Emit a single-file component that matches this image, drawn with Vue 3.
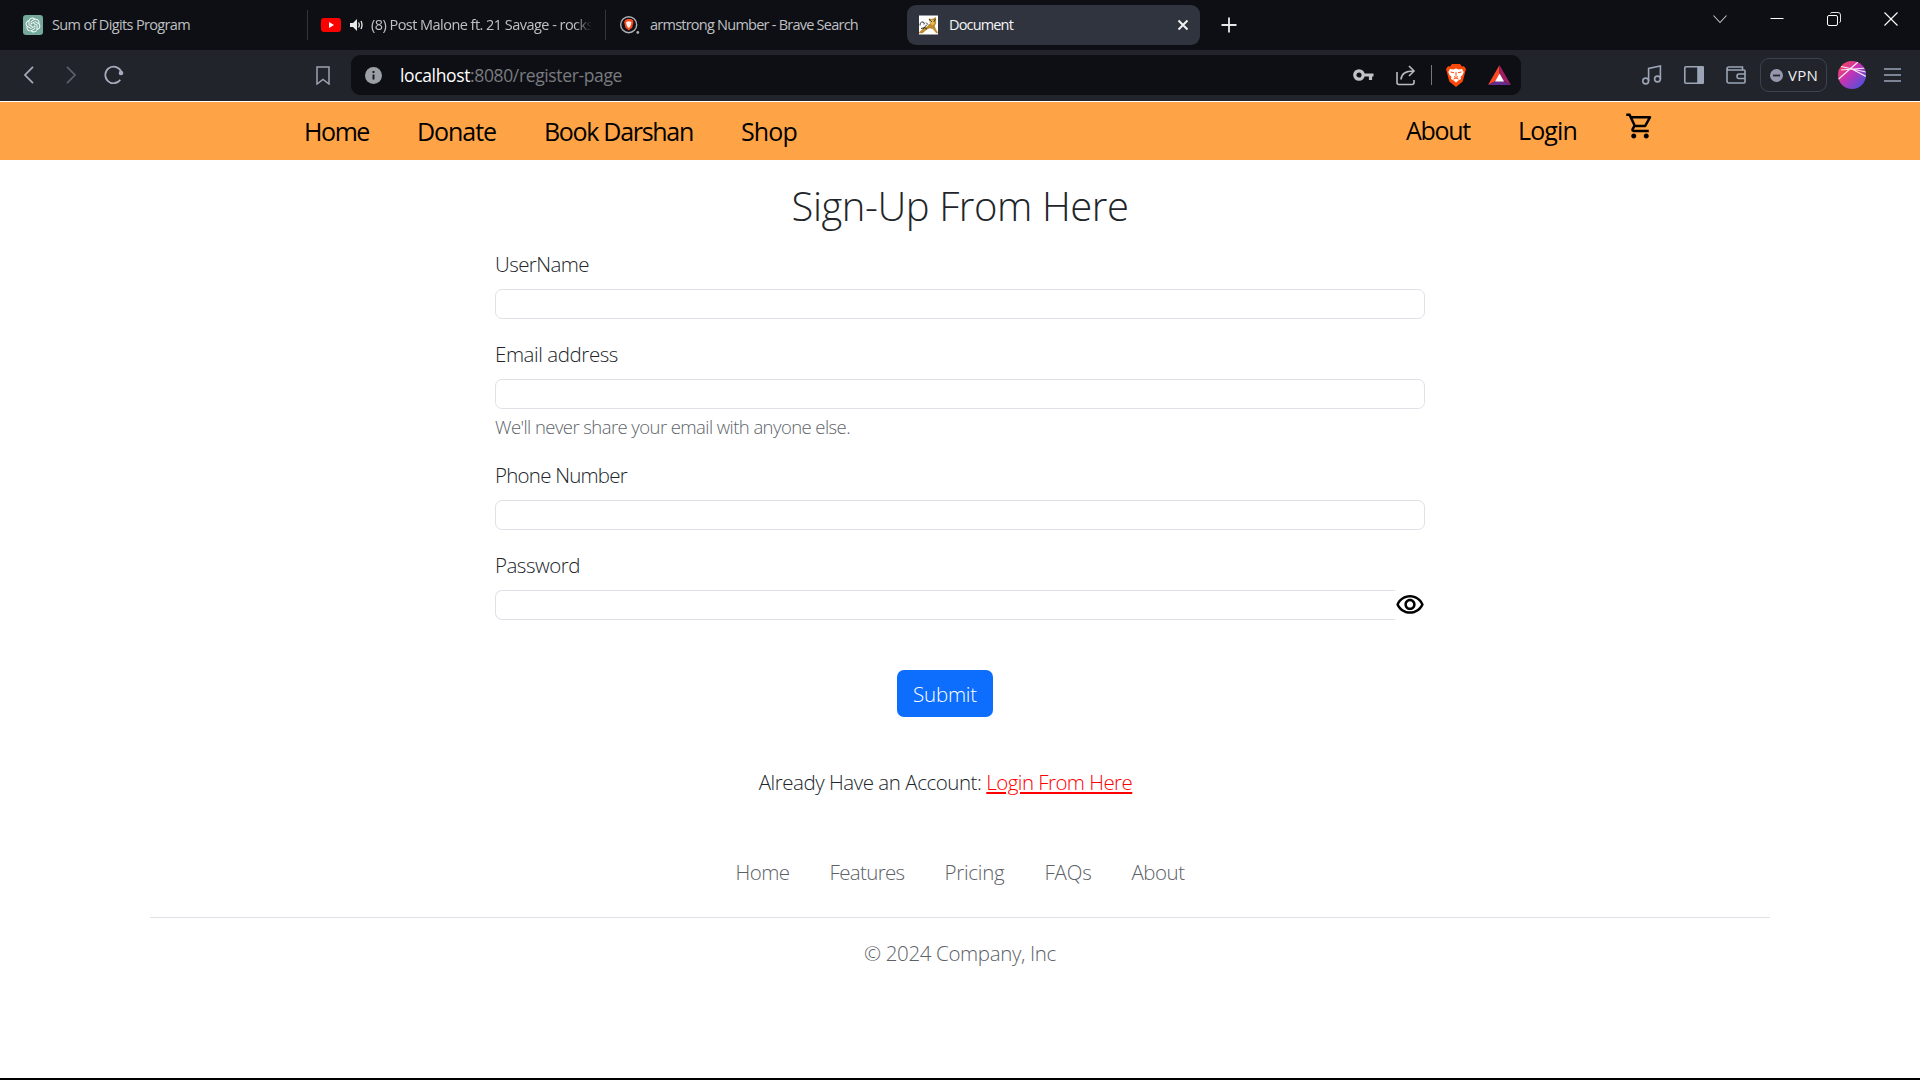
<script setup>
// Spreads the letters of an element so that its text takes the given width.
const vFit = {
  mounted(el, { value }) {
    el.style.letterSpacing = '0px'
    const natural = el.getBoundingClientRect().width
    const count = el.textContent.trim().length
    el.style.letterSpacing = `${(value - natural) / count}px`
  }
}

const navLeft = [
  { label: 'Home', width: 65 },
  { label: 'Donate', width: 79 },
  { label: 'Book Darshan', width: 149 },
  { label: 'Shop', width: 56 }
]
const navRight = [
  { label: 'About', width: 64 },
  { label: 'Login', width: 59 }
]
const fields = [
  { id: 'username', label: 'UserName', width: 94, type: 'text' },
  { id: 'email', label: 'Email address', width: 123, type: 'email', help: "We'll never share your email with anyone else." },
  { id: 'phone', label: 'Phone Number', width: 132, type: 'text' },
  { id: 'password', label: 'Password', width: 85, type: 'password' }
]
const footerLinks = [
  { label: 'Home', width: 54 },
  { label: 'Features', width: 75 },
  { label: 'Pricing', width: 60 },
  { label: 'FAQs', width: 47 },
  { label: 'About', width: 53 }
]
</script>

<template>
  <div class="screen">
    <header class="tabs">
      <div class="tab tab-one">
        <svg width="20" height="20" viewBox="0 0 20 20">
          <rect width="20" height="20" rx="3" fill="#74a99b" />
          <g transform="translate(2.6 2.6) scale(.617)">
            <path fill="#fff" d="M22.2819 9.8211a5.9847 5.9847 0 0 0-.5157-4.9108 6.0462 6.0462 0 0 0-6.5098-2.9A6.0651 6.0651 0 0 0 4.9807 4.1818a5.9847 5.9847 0 0 0-3.9977 2.9 6.0462 6.0462 0 0 0 .7427 7.0966 5.98 5.98 0 0 0 .511 4.9107 6.051 6.051 0 0 0 6.5146 2.9001A5.9847 5.9847 0 0 0 13.2599 24a6.0557 6.0557 0 0 0 5.7718-4.2058 5.9894 5.9894 0 0 0 3.9977-2.9001 6.0557 6.0557 0 0 0-.7475-7.0729zm-9.022 12.6081a4.4755 4.4755 0 0 1-2.8764-1.0408l.1419-.0804 4.7783-2.7582a.7948.7948 0 0 0 .3927-.6813v-6.7369l2.02 1.1686a.071.071 0 0 1 .038.052v5.5826a4.504 4.504 0 0 1-4.4945 4.4944zm-9.6607-4.1254a4.4708 4.4708 0 0 1-.5346-3.0137l.142.0852 4.783 2.7582a.7712.7712 0 0 0 .7806 0l5.8428-3.3685v2.3324a.0804.0804 0 0 1-.0332.0615L9.74 19.9502a4.4992 4.4992 0 0 1-6.1408-1.6464zM2.3408 7.8956a4.485 4.485 0 0 1 2.3655-1.9728V11.6a.7664.7664 0 0 0 .3879.6765l5.8144 3.3543-2.0201 1.1685a.0757.0757 0 0 1-.071 0l-4.8303-2.7865A4.504 4.504 0 0 1 2.3408 7.872zm16.5963 3.8558L13.1038 8.364 15.1192 7.2a.0757.0757 0 0 1 .071 0l4.8303 2.7913a4.4944 4.4944 0 0 1-.6765 8.1042v-5.6772a.79.79 0 0 0-.407-.667zm2.0107-3.0231l-.142-.0852-4.7735-2.7818a.7759.7759 0 0 0-.7854 0L9.409 9.2297V6.8974a.0662.0662 0 0 1 .0284-.0615l4.8303-2.7866a4.4992 4.4992 0 0 1 6.6802 4.66zM8.3065 12.863l-2.02-1.1638a.0804.0804 0 0 1-.038-.0567V6.0742a4.4992 4.4992 0 0 1 7.3757-3.4537l-.142.0805L8.704 5.459a.7948.7948 0 0 0-.3927.6813zm1.0976-2.3654l2.602-1.4998 2.6069 1.4998v2.9994l-2.5974 1.4997-2.6067-1.4997Z" />
          </g>
        </svg>
        <span v-fit="138" class="tab-title">Sum of Digits Program</span>
      </div>
      <div class="tab tab-two">
        <svg width="20" height="14" viewBox="0 0 20 14"><rect width="20" height="14" rx="3" fill="#f00" /><path d="M8 4v6l5-3z" fill="#fff" /></svg>
        <svg class="speaker" width="13" height="12" viewBox="0 0 13 12"><path d="M0 4h3l4-4v12L3 8H0z" fill="#e8e8e8" /><path d="M8.5 3.5q1.6 2.5 0 5M11 2q2 4 0 8" fill="none" stroke="#e8e8e8" stroke-width="1.3" /></svg>
        <span class="tab-title clipped"><span v-fit="222">(8) Post Malone ft. 21 Savage - rocks</span></span>
      </div>
      <div class="tab tab-three">
        <svg width="20" height="20" viewBox="0 0 20 20"><circle cx="8.7" cy="9.7" r="8" fill="#121317" stroke="#adb0b5" stroke-width="1.4" /><path d="M5 5.2 7 4h4l2 1.2.4 2-1.2 5.3-3.4 3.1-3.4-3.1L4.200 7.200z" fill="#fb4b20" /><path d="m6 7 2.700-.7L11.400 7l-.5 2.700-.9 2-1.300 1.300-1.300-1.300-.9-2z" fill="#fff0eb" /><circle cx="17.800" cy="17.500" r="1.400" fill="#aaa" /></svg>
        <span v-fit="208" class="tab-title">armstrong Number - Brave Search</span>
      </div>
      <div class="tab tab-active">
        <svg width="19" height="20" viewBox="0 0 19 20"><path d="M0 .5h19v19H0z" fill="#fff" /><path d="M0 17.500 4 13.500l4-2 3-3L10 3l1.500 1 3-.5L17 2l.2 6-1.400 3 1.200 3.500 2 3-1.500 1-3.700-4.500-3.300-.7-3.500 2-3.500 3H0z" fill="#bd8b2b" /><path d="M11 5h5l-.5 3.500-2 2-2.200-2z" fill="#e2bd61" /><path d="M1 10.500q0-4 3-3.500 2 .5 1 2.500M2 13.500q4-2 6 .5M10 4l1.500 2M16.500 4 15 6M7 7.500l2 2M8 9.500l-4 4.500" stroke="#343434" stroke-width="1" fill="none" /><circle cx="12.500" cy="6.500" r=".6" fill="#433" /><circle cx="15" cy="6.500" r=".6" fill="#433" /></svg>
        <span v-fit="64" class="tab-title">Document</span>
        <svg class="tab-close" width="12" height="12" viewBox="0 0 12 12"><path d="m1.500 1.500 9 9m0-9-9 9" stroke="#f2f2f2" stroke-width="2" /></svg>
      </div>
      <svg class="new-tab" width="16" height="16" viewBox="0 0 16 16"><path d="M8 .5v15M.5 8h15" stroke="#e8e8e8" stroke-width="1.800" /></svg>
      <div class="window-controls">
        <svg width="14" height="14" viewBox="0 0 14 14"><path d="m.5 3.500 6.500 7 6.500-7" fill="none" stroke="#c4c4c6" stroke-width="1.100" /></svg>
        <svg width="14" height="14" viewBox="0 0 14 14"><path d="M.5 6.500h13" stroke="#fff" /></svg>
        <svg width="14" height="14" viewBox="0 0 14 14"><rect x=".5" y="3.500" width="10" height="10" rx="1.500" fill="none" stroke="#fff" /><path d="M3.500 1.500q0-1 1.500-1h6q2.500 0 2.500 2.500v6q0 1.500-1 1.500" fill="none" stroke="#ddd" /></svg>
        <svg width="14" height="14" viewBox="0 0 14 14"><path d="m.5.5 13 13m0-13-13 13" stroke="#fff" stroke-width="1.100" /></svg>
      </div>
    </header>

    <div class="toolbar">
      <svg class="back" width="10" height="18" viewBox="0 0 10 18"><path d="M9 .8 1 9l8 8.200" fill="none" stroke="#a5adbc" stroke-width="1.700" /></svg>
      <svg class="forward" width="10" height="18" viewBox="0 0 10 18"><path d="m1 .8 8 8.200-8 8.200" fill="none" stroke="#5a606c" stroke-width="1.700" /></svg>
      <svg class="reload" width="20" height="20" viewBox="0 0 20 20"><path d="M16.300 14.800A8.300 8.300 0 1 1 17 6.200" fill="none" stroke="#a5adbc" stroke-width="1.700" /><circle cx="17" cy="8" r="2.300" fill="#a5adbc" /></svg>
      <svg class="bookmark" width="14" height="19" viewBox="0 0 14 19"><path d="M1 1h12v17l-6-4.500L1 18z" fill="none" stroke="#9ba2b0" stroke-width="1.500" /></svg>
      <div class="address">
        <svg width="17" height="17" viewBox="0 0 17 17"><circle cx="8.500" cy="8.500" r="8.500" fill="#9aa0a6" /><path d="M8.500 7.500v5M8.500 4v2" stroke="#17181c" stroke-width="1.900" /></svg>
        <span v-fit="222" class="url"><b>localhost</b>:8080/register-page</span>
        <svg class="key" width="21" height="14" viewBox="0 0 21 14"><circle cx="6" cy="7" r="4.200" fill="none" stroke="#c0c2c5" stroke-width="3.300" /><path d="M10.500 7h10M17.500 7v5" fill="none" stroke="#c0c2c5" stroke-width="3.200" /></svg>
        <svg class="share" width="20" height="21" viewBox="0 0 20 21"><path d="M1 7v10.500q0 2 2 2h13q2 0 2-2V15" fill="none" stroke="#b9bbbf" stroke-width="1.600" /><path d="M5 14.500Q5.500 6 17.500 6M13 1l5 5-5 5" fill="none" stroke="#b9bbbf" stroke-width="1.600" /></svg>
        <i class="divider" />
        <svg class="lion" width="20" height="23" viewBox="0 0 20 23"><path d="M6 0h8l2 2.500 2-.3L20 5l-.8 3-2.500 9.500L10 23l-6.700-5.500L.8 8 0 5l2-2.800 2 .3z" fill="#fb4a08" /><path d="m4 5 3 .5L10 4.500l3 1 3-.5 1.700 3-1.200 3-2 2 .5 2-2 1-3 2.500L7 16l-2-1 .5-2-2-2-1.200-3z" fill="#fff" /><path d="m4.500 8 3.500.7M15.500 8l-3.500.7M8 12.500l2 1 2-1M10 8v4M7.500 15l2.500-1 2.500 1" stroke="#fb4a08" stroke-width="1" fill="none" /></svg>
        <svg class="bat" width="23" height="20" viewBox="0 0 23 20"><path d="M11.500 0 0 20l7.500-4 4-7z" fill="#ff4724" /><path d="M11.500 0 23 20l-7.500-4-4-7z" fill="#9e1f63" /><path d="M0 20h23l-7.500-4h-8z" fill="#662d91" /><path d="m11.500 8.500 4.500 8H7z" fill="#fff" /></svg>
      </div>
      <svg class="music" width="20" height="20" viewBox="0 0 20 20"><circle cx="3.700" cy="16" r="2.900" /><circle cx="15.500" cy="14" r="2.900" /><path d="M6.600 16V3.500L18.400 1v13" /></svg>
      <svg class="panel" width="20" height="18" viewBox="0 0 20 18"><rect x=".8" y=".8" width="18.400" height="16.400" rx="1" /><path d="M14 1h5v16h-5z" fill="#9ba5b5" /></svg>
      <svg class="wallet" width="20" height="18" viewBox="0 0 20 18"><path d="M16.500 4V1H3Q1 1 1 3v12q0 2 2 2h15q1 0 1-1V5q0-1-1-1H3Q1 4 1 2.500M19 8h-6q-2 0-2 2.300T13 12.500h6" /></svg>
      <div class="vpn">
        <svg width="13" height="13" viewBox="0 0 13 13"><circle cx="6.500" cy="6.500" r="6.500" fill="#9697ad" /><path d="M3 6.500h7" stroke="#252833" stroke-width="1.800" /></svg>
        <span v-fit="30">VPN</span>
      </div>
      <svg class="avatar" width="28" height="28" viewBox="0 0 28 28">
        <defs><linearGradient id="avatar-fill" x1="0" y1="0" x2="1" y2="1"><stop offset=".1" stop-color="#f54560" /><stop offset=".45" stop-color="#c433b4" /><stop offset=".95" stop-color="#4055e2" /></linearGradient><clipPath id="avatar-clip"><circle cx="14" cy="14" r="14" /></clipPath></defs>
        <circle cx="14" cy="14" r="14" fill="url(#avatar-fill)" />
        <path clip-path="url(#avatar-clip)" d="M0 18.500 20 1M3 5.500 28 11M12 7l16 8.500M3 9l25-2" fill="none" stroke="#fff" stroke-opacity=".9" stroke-width="1.200" />
      </svg>
      <svg class="menu" width="17" height="14" viewBox="0 0 17 14"><path d="M0 1h17M0 7h17M0 13h17" stroke-width="1.500" /></svg>
    </div>

    <nav class="site-nav">
      <div class="nav-left">
        <a v-for="item in navLeft" :key="item.label" v-fit="item.width">{{ item.label }}</a>
      </div>
      <div class="nav-right">
        <a v-for="item in navRight" :key="item.label" v-fit="item.width">{{ item.label }}</a>
        <svg width="30" height="30" viewBox="0 0 24 24"><path d="M15.550 13c.75 0 1.410-.41 1.750-1.030l3.580-6.490c.37-.66-.11-1.480-.87-1.480H5.210l-.94-2H1v2h2l3.600 7.590-1.350 2.440C4.520 15.370 5.480 17 7 17h12v-2H7l1.100-2h7.450zM6.160 6h12.150l-2.760 5H8.530L6.160 6zM7 18c-1.100 0-1.990.9-1.990 2S5.900 22 7 22s2-.9 2-2-.9-2-2-2zm10 0c-1.100 0-1.990.9-1.990 2s.89 2 1.990 2 2-.9 2-2-.9-2-2-2z" /></svg>
      </div>
    </nav>

    <main>
      <h1><span v-fit="337">Sign-Up From Here</span></h1>
      <form @submit.prevent>
        <div v-for="field in fields" :key="field.id" class="field">
          <label :for="field.id"><span v-fit="field.width">{{ field.label }}</span></label>
          <div class="control" :class="{ grouped: field.type === 'password' }">
            <input :id="field.id" :type="field.type" />
            <svg v-if="field.type === 'password'" width="30" height="30" viewBox="0 0 24 24"><path d="M12 6c3.790 0 7.170 2.130 8.820 5.500C19.170 14.870 15.790 17 12 17s-7.170-2.130-8.820-5.500C4.830 8.130 8.210 6 12 6m0-2C7 4 2.730 7.110 1 11.500 2.730 15.890 7 19 12 19s9.270-3.110 11-7.500C21.270 7.110 17 4 12 4zm0 5c1.380 0 2.500 1.120 2.500 2.500S13.380 14 12 14s-2.500-1.120-2.500-2.500S10.620 9 12 9m0-2c-2.480 0-4.500 2.020-4.500 4.500S9.520 16 12 16s4.500-2.020 4.500-4.500S14.480 7 12 7z" /></svg>
          </div>
          <div v-if="field.help" class="help"><span v-fit="355">{{ field.help }}</span></div>
        </div>
        <button type="submit"><span v-fit="64">Submit</span></button>
        <p class="login"><span v-fit="228" class="question">Already Have an Account: </span><a v-fit="146">Login From Here</a></p>
      </form>
    </main>

    <footer>
      <div class="footer-links">
        <a v-for="link in footerLinks" :key="link.label" v-fit="link.width">{{ link.label }}</a>
      </div>
      <p><span v-fit="192">© 2024 Company, Inc</span></p>
    </footer>
  </div>
</template>

<style>
body {
  margin: 0;
  overflow: hidden;
}
</style>

<style scoped>
.screen {
  box-sizing: border-box;
  width: 1920px;
  height: 1080px;
  display: flex;
  flex-direction: column;
  overflow: hidden;
  background: #fff;
  border-bottom: 2px solid #000;
  color: #212529;
  font-family: "Open Sans", "Noto Sans", sans-serif;
}
svg {
  display: block;
  flex: none;
}
span,
a {
  white-space: pre;
}

.tabs {
  height: 50px;
  flex: none;
  display: flex;
  align-items: center;
  background: #0e0f14;
}
.tab {
  box-sizing: border-box;
  height: 30px;
  display: flex;
  align-items: center;
}
.tab-title {
  font-size: 14.5px;
  line-height: 20px;
  color: #bfc0c3;
}
.tab-one {
  width: 308px;
  padding-left: 23px;
  gap: 9px;
  border-right: 1px solid #34353a;
}
.tab-two {
  width: 298px;
  padding-left: 13px;
  border-right: 1px solid #34353a;
}
.speaker {
  margin: 0 8px 0 9px;
}
.clipped {
  width: 224px;
  -webkit-mask-image: linear-gradient(90deg, #000 204px, transparent 221px);
  mask-image: linear-gradient(90deg, #000 204px, transparent 221px);
}
.tab-three {
  width: 301px;
  padding-left: 14px;
  gap: 10px;
}
.tab-active {
  width: 293px;
  height: 40px;
  padding: 0 11px 0 12px;
  gap: 11px;
  border-radius: 9px;
  background: #30343e;
}
.tab-active .tab-title {
  color: #f5f5f6;
}
.tab-close {
  margin-left: auto;
}
.new-tab {
  margin-left: 21px;
}
.window-controls {
  display: flex;
  gap: 43px;
  margin: -13px 22px 0 auto;
}

.toolbar {
  height: 51px;
  box-sizing: border-box;
  padding-bottom: 1px;
  flex: none;
  display: flex;
  align-items: center;
  background: #22242c;
}
.back { margin-left: 24px; }
.forward { margin-left: 32px; }
.reload { margin-left: 28px; }
.bookmark { margin-left: 192px; }
.address {
  box-sizing: border-box;
  width: 1170px;
  height: 40px;
  margin-left: 21px;
  padding: 0 10px 0 14px;
  display: flex;
  align-items: center;
  border-radius: 9px;
  background: #0e0f14;
}
.url {
  margin-left: 18px;
  font-size: 17.5px;
  line-height: 24px;
  color: #797b80;
}
.url b {
  font-weight: 400;
  color: #fff;
}
.key { margin-left: auto; }
.share { margin-left: 22px; }
.divider {
  width: 1px;
  height: 20px;
  margin: 0 14px 0 15px;
  background: #777;
}
.bat { margin-left: 22px; }
.music,
.panel,
.wallet,
.menu {
  fill: none;
  stroke: #9ba5b5;
  stroke-width: 1.6px;
}
.music { margin-left: 121px; }
.panel { margin-left: 22px; }
.wallet { margin-left: 22px; }
.vpn {
  box-sizing: border-box;
  width: 67px;
  height: 34px;
  margin-left: 14px;
  padding-left: 9px;
  display: flex;
  align-items: center;
  gap: 5px;
  border: 1px solid #3e424d;
  border-radius: 9px;
  font-size: 15px;
  color: #eee;
}
.avatar { margin-left: 11px; }
.menu { margin-left: 18px; }

.site-nav {
  box-sizing: border-box;
  height: 59px;
  flex: none;
  display: flex;
  justify-content: space-between;
  padding: 10px 265px 0 304px;
  border-top: 1px solid #fff;
  background: #ffa446;
  background-clip: padding-box;
  font-size: 25px;
  line-height: 38px;
  color: #000;
}
.nav-left {
  display: flex;
  gap: 48px;
}
.nav-right {
  display: flex;
  margin-top: -1px;
  gap: 48px;
}

main {
  padding: 22px 0 0;
}
h1 {
  margin: 0 0 19px;
  font-size: 40px;
  font-weight: 300;
  line-height: 48px;
  text-align: center;
}
form {
  width: 930px;
  margin: 0 auto;
  display: flex;
  flex-direction: column;
  font-size: 20.5px;
  font-weight: 300;
  line-height: 30px;
}
.field {
  margin-bottom: 20px;
}
label {
  display: block;
  margin-bottom: 10px;
}
.control {
  display: flex;
  height: 30px;
}
input {
  box-sizing: border-box;
  width: 100%;
  height: 30px;
  padding: 0 15px;
  border: 1px solid #dee2e6;
  border-radius: 7px;
  outline: none;
  background: #fff;
}
.grouped input {
  width: 900px;
  border-right: 0;
  border-radius: 7px 0 0 7px;
}
.help {
  margin-top: 5px;
  font-size: 18.5px;
  line-height: 26px;
  color: #60656a;
}
button {
  width: 96px;
  height: 47px;
  margin: 30px 0 0 402px;
  padding: 0;
  border: 0;
  border-radius: 7px;
  background: #0d6efd;
  color: #fff;
  font: 300 20.5px/30px "Open Sans", "Noto Sans", sans-serif;
}
.login {
  display: flex;
  justify-content: center;
  margin: 50px 29px 0 0;
}
.login a {
  color: #f00;
  text-decoration: underline;
  text-decoration-thickness: 2px;
  text-underline-offset: 2px;
}

footer {
  width: 1620px;
  margin: 60px auto 0;
  font-size: 20.5px;
  font-weight: 300;
  line-height: 30px;
  color: #5c6167;
}
.footer-links {
  display: flex;
  justify-content: center;
  gap: 40px;
  padding-bottom: 30px;
  border-bottom: 1px solid #dee2e6;
}
footer p {
  margin: 20px 0 0;
  text-align: center;
}
</style>
